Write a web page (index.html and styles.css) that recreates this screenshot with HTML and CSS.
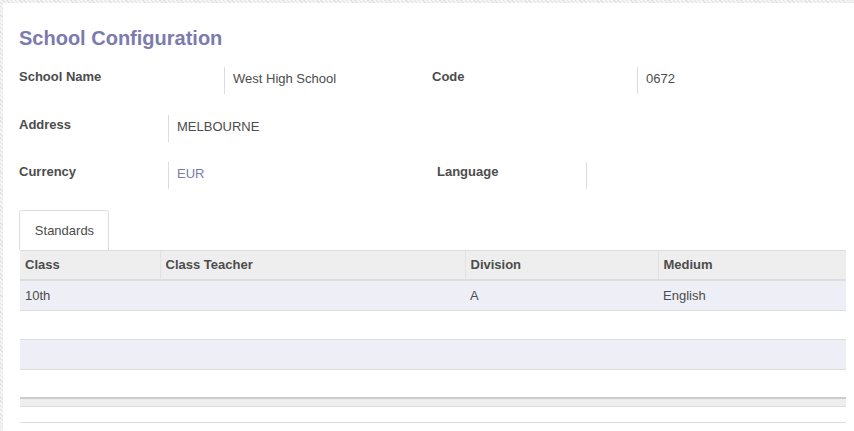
FILE: index.html
```html
<!DOCTYPE html>
<html>
<head>
<meta charset="utf-8">
<link rel="stylesheet" href="styles.css">
</head>
<body>
<div class="sheet">
  <h1 class="title">School Configuration</h1>
  <div class="row row1">
    <div class="label l1">School Name</div>
    <div class="value v1">West High School</div>
    <div class="label l2">Code</div>
    <div class="value v2">0672</div>
  </div>
  <div class="row row2">
    <div class="label l3">Address</div>
    <div class="value">MELBOURNE</div>
  </div>
  <div class="row row3">
    <div class="label l3">Currency</div>
    <div class="value v3"><span class="link">EUR</span></div>
    <div class="label l4">Language</div>
    <div class="value"></div>
  </div>
  <div class="tabs">
    <div class="tab">Standards</div>
  </div>
  <table class="grid">
    <thead>
      <tr>
        <th class="c1">Class</th>
        <th class="c2">Class Teacher</th>
        <th class="c3">Division</th>
        <th class="c4">Medium</th>
      </tr>
    </thead>
    <tbody>
      <tr class="odd"><td>10th</td><td></td><td>A</td><td>English</td></tr>
      <tr class="short"><td></td><td></td><td></td><td></td></tr>
      <tr class="odd"><td></td><td></td><td></td><td></td></tr>
      <tr><td></td><td></td><td></td><td></td></tr>
    </tbody>
    <tfoot>
      <tr><td></td><td></td><td></td><td></td></tr>
    </tfoot>
  </table>
  <div class="endline"></div>
</div>
</body>
</html>
```
FILE: styles.css
```css
html, body {
  margin: 0;
  padding: 0;
}
body {
  background: repeating-linear-gradient(45deg, #e4e4e4 0 1px, #f4f4f4 1px 3px);
  font-family: "Liberation Sans", Arial, sans-serif;
  font-size: 13px;
  color: #4c4c4c;
  height: 431px;
  overflow: hidden;
}
.sheet {
  background: #fff;
  margin: 3px 0 0 3px;
  padding: 22px 9px 0 16px;
  height: 440px;
  box-sizing: border-box;
}
.title {
  margin: 0;
  font-size: 20px;
  line-height: 26px;
  font-weight: bold;
  color: #7c7bad;
}
.row {
  display: flex;
  height: 27px;
}
.row1 { margin-top: 16px; }
.row2 { margin-top: 21px; }
.row3 { margin-top: 20px; }
.label {
  font-weight: bold;
  padding-top: 2px;
  line-height: 15px;
}
.l1 { width: 205px; }
.l2 { width: 205px; }
.l3 { width: 149px; }
.l4 { width: 149px; }
.value {
  border-left: 1px solid #dcdcdc;
  padding-left: 8px;
  line-height: 15px;
  padding-top: 4px;
}
.v1 { width: 199px; }
.v3 { width: 260px; }
.link { color: #7c7bad; }
.tabs {
  margin-top: 21px;
  display: flex;
  height: 40px;
}
.tab {
  width: 90px;
  box-sizing: border-box;
  border: 1px solid #ddd;
  border-bottom: none;
  border-radius: 4px 4px 0 0;
  text-align: center;
  line-height: 39px;
  background: #fff;
  padding-left: 1px;
}
.grid {
  width: 826px;
  border-collapse: collapse;
  margin-left: 1px;
}
.grid th {
  background: #eee;
  text-align: left;
  font-weight: bold;
  height: 29px;
  padding: 0 5px;
  border-top: 1px solid #ddd;
  border-bottom: 2px solid #ddd;
  border-left: 1px solid #e2e2e2;
  box-sizing: border-box;
}
.grid th.c1 { border-left: none; width: 140px; }
.grid th.c2 { width: 305px; }
.grid th.c3 { width: 193px; }
.grid td {
  height: 29px;
  padding: 0 5px;
  border-bottom: 1px solid #ddd;
}
.grid tbody tr.odd td { background: #eeeef6; }
.grid tbody tr.short td { height: 28px; }
.grid tbody tr:last-child td { height: 27px; border-bottom: none; }
.grid tfoot td {
  height: 7px;
  padding: 0;
  background: #eee;
  border-top: 2px solid #ccc;
  border-bottom: 1px solid #ddd;
}
.endline {
  margin-left: 1px;
  margin-top: 15px;
  border-top: 1px solid #ddd;
  width: 826px;
}
```
